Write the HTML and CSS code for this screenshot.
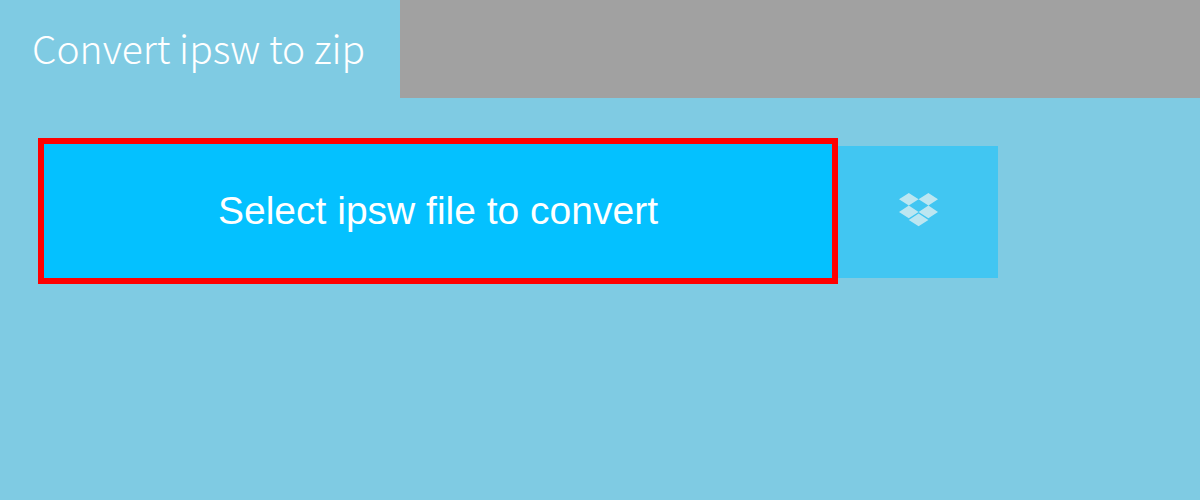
FILE: index.html
```html
<!DOCTYPE html>
<html lang="en">
<head>
<meta charset="utf-8">
<title>Convert ipsw to zip</title>
<link rel="stylesheet" href="styles.css">
</head>
<body>
<header class="bar">
  <h1 class="tab">Convert ipsw to zip</h1>
</header>
<main class="upload">
  <button class="select-file" type="button">Select ipsw file to convert</button>
  <button class="dropbox" type="button" aria-label="Dropbox">
    <svg class="dropbox-icon" viewBox="0 0 40 34" aria-hidden="true">
      <path d="M10.8 0l9.8 6.3-9.8 6.3L1 6.3zM30.4 0l9.6 6.3-9.6 6.3-9.8-6.3zM10.8 12.6l9.8 6.3-9.8 6.3L1 18.9zM30.4 12.6l9.6 6.3-9.6 6.3-9.8-6.3zM20.6 20.6l9.8 6.3-9.8 6.3-9.8-6.3z"/>
    </svg>
  </button>
</main>
</body>
</html>
```
FILE: styles.css
```css
* { box-sizing: border-box; }
body {
  margin: 0;
  min-height: 100vh;
  background: #7fcbe3;
  color: #fff;
}
.bar {
  display: flex;
  background: #a1a1a1;
}
.tab {
  margin: 0;
  padding: 19px 32px 23px;
  flex: 0 0 400px;
  background: #7fcbe3;
  font: 200 39px/56px "Source Sans Pro", "Noto Sans CJK SC", "Open Sans", sans-serif;
  white-space: nowrap;
}
.upload {
  display: flex;
  align-items: center;
  padding: 40px 38px;
}
.select-file {
  flex: 0 1 800px;
  padding: 46px 20px;
  border: 6px solid #f00;
  background: #04c1ff;
  color: #fff;
  font: 39px/42px "Liberation Sans", Arial, sans-serif;
}
.dropbox {
  display: grid;
  place-items: center;
  flex: 0 0 160px;
  height: 132px;
  margin-top: 2px;
  padding: 0 0 4px;
  border: 0;
  background: #41c6f2;
}
.dropbox-icon {
  width: 40px;
  height: 34px;
  fill: #bce6f1;
}
```
